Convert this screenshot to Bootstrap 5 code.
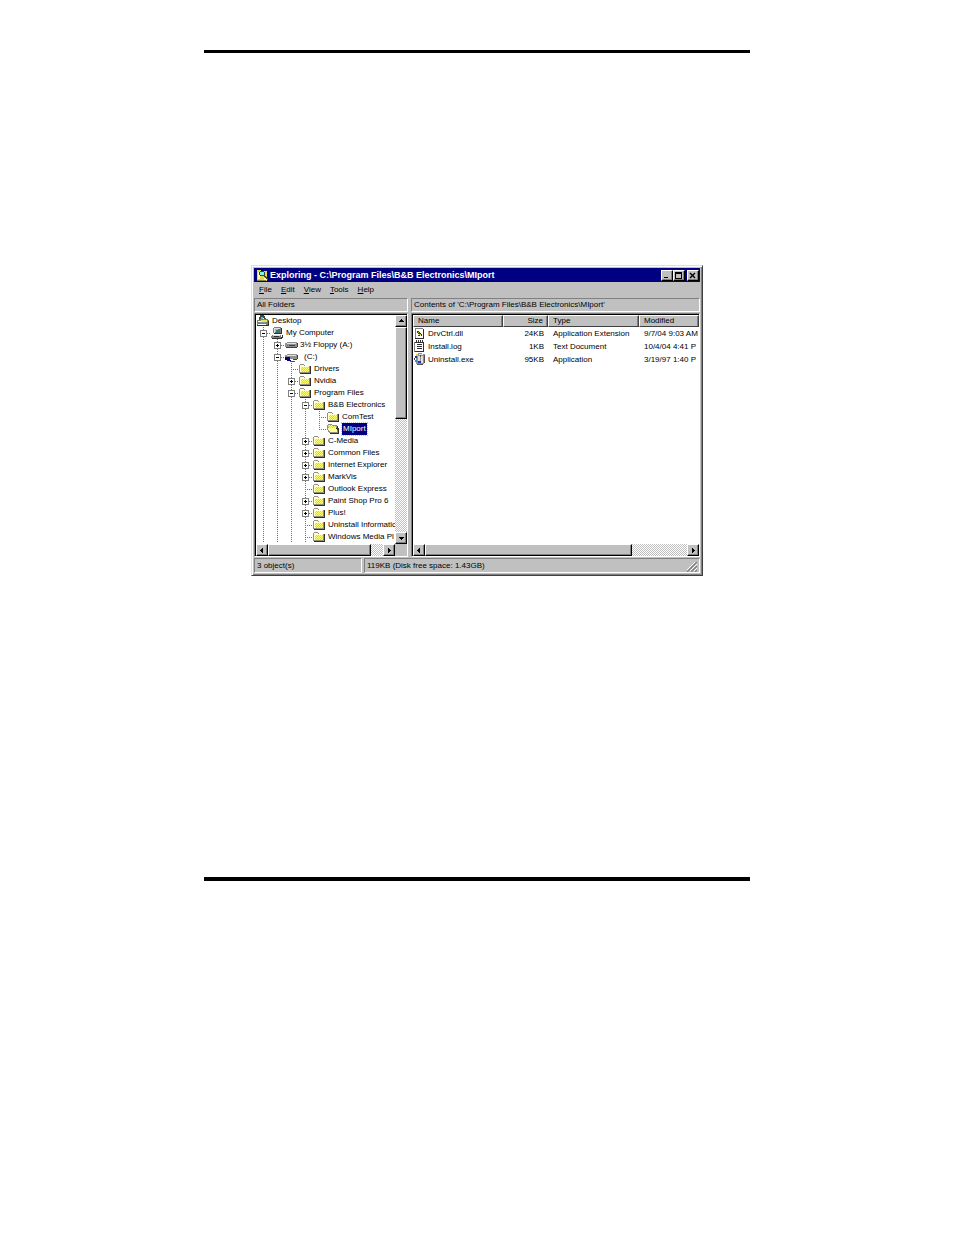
<!DOCTYPE html>
<html lang="en">
<head>
<meta charset="utf-8">
<meta name="viewport" content="width=device-width, initial-scale=1">
<title>Exploring - MIport</title>
<link href="https://cdn.jsdelivr.net/npm/bootstrap@5.3.0/dist/css/bootstrap.min.css" rel="stylesheet">
<style>
  body { font-family: "Liberation Sans", Arial, sans-serif; font-size: 8px; line-height: 12px; color: #000; background: #fff; }
  button { font: inherit; color: inherit; border: 0; padding: 0; background: none; }
  .sheet { max-width: 546px; padding-top: 50px; }
  .rule { height: 3px; background: #000; }
  .rule-end { height: 4px; margin-top: 301px; }
  .explorer { max-width: 452px; margin-top: 212px; background: #c0c0c0; border: 1px solid; border-color: #dfdfdf #404040 #404040 #dfdfdf; box-shadow: inset 1px 1px #fff, inset -1px -1px #808080; padding: 2px; }
  .title-strip { height: 14px; background: #000080; color: #fff; font: bold 9px/14px "Liberation Sans", Arial, sans-serif; padding: 0 1px 0 2px; }
  .raised { background: #c0c0c0; border: 1px solid; border-color: #fff #000 #000 #fff; box-shadow: inset -1px -1px #808080; display: flex; align-items: center; justify-content: center; flex: none; }
  .sunken { border: 1px solid; border-color: #808080 #fff #fff #808080; }
  .win-btn { width: 12px; height: 11px; }
  .win-close { margin-left: 2px; }
  .menu-strip { height: 16px; padding: 0 5px; gap: 9px; }
  .caption { height: 14px; padding: 0 2px; line-height: 12px; white-space: nowrap; overflow: hidden; }
  .panes { display: grid; grid-template-columns: 154px minmax(0, 1fr); column-gap: 3px; }
  .well { background: #fff; border: 1px solid; border-color: #808080 #fff #fff #808080; box-shadow: inset 1px 1px #000; padding: 1px 0 0 1px; margin-top: 1px; }
  .tree { padding: 0 0 1px; margin: 0; list-style: none; overflow: hidden; }
  .tree li { display: flex; height: 12px; white-space: nowrap; }
  .tree svg { width: 14px; height: 12px; flex: none; margin-right: 2px; }
  .guide { width: 14px; height: 12px; flex: none; display: flex; justify-content: center; align-items: center;
    background: repeating-linear-gradient(#707070 0 1px, transparent 1px 2px) 7px 0 / 1px 12px no-repeat; }
  .guide.arm { background: repeating-linear-gradient(#707070 0 1px, transparent 1px 2px) 7px 0 / 1px 12px no-repeat,
    repeating-linear-gradient(90deg, #707070 0 1px, transparent 1px 2px) 7px 6px / 7px 1px no-repeat; }
  .guide.end { background-size: 1px 7px, 7px 1px; }
  .toggle { width: 7px; height: 7px; border: 1px solid #808080; margin: 1px 0 0 1px; flex: none;
    background: linear-gradient(#000, #000) center / 3px 1px no-repeat, #fff; }
  .toggle.plus { background: linear-gradient(#000, #000) center / 3px 1px no-repeat, linear-gradient(#000, #000) center / 1px 3px no-repeat, #fff; }
  .picked { background: #000080; color: #fff; outline: 1px dotted #d0d060; padding: 0 1px; }
  .track { background: repeating-conic-gradient(#c0c0c0 0 25%, #fff 0 50%) 0 0 / 2px 2px; }
  .knob { width: 12px; height: 12px; }
  .knob svg, .win-btn svg { display: block; }
  .files { table-layout: fixed; width: 100%; border-collapse: separate; border-spacing: 0; }
  .files th { font-weight: normal; height: 12px; line-height: 10px; padding: 0 4px; background: #c0c0c0; border: 1px solid; border-color: #fff #404040 #404040 #fff; box-shadow: inset -1px 0 #808080; }
  .files td { height: 13px; line-height: 13px; padding: 0 4px 0 5px; }
  .files th, .files td { white-space: nowrap; overflow: hidden; }
  .files td:first-child { padding-left: 1px; }
  .files td svg { width: 12px; height: 13px; flex: none; margin-right: 2px; }
  .num { text-align: right; }
  .status { height: 15px; margin-top: 1px; gap: 2px; }
  .status .sunken { line-height: 13px; padding: 0 2px; }
</style>
</head>
<body>
<svg width="0" height="0" class="position-absolute" aria-hidden="true" shape-rendering="crispEdges">
  <pattern id="dither" width="2" height="2" patternUnits="userSpaceOnUse"><path fill="#ffff70" d="M0 0h2v2H0z"/><path fill="#e0d838" d="M0 0h1v1H0zM1 1h1v1H1z"/></pattern>
  <symbol id="folder" viewBox="0 0 14 12">
    <path fill="#909080" d="M2 1h4v1h1v1h5v7H1V2h1z"/><path fill="#ffffd0" d="M2 2h4v1h5v1H3v5H2z"/><path fill="url(#dither)" d="M3 4h8v5H3z"/><path fill="#303030" d="M12 3h1v8H2v-1h10z"/>
  </symbol>
  <symbol id="folder-open" viewBox="0 0 14 12">
    <path fill="#909080" d="M2 1h4v1h5v3h1v5H3V9H2V7H1V2h1z"/><path fill="url(#dither)" d="M2 2h4v1h4v2H5v1H3z"/><path fill="#ffff90" d="M2 5h8v1h1v3H4V8H3V7H2z"/><path fill="#303030" d="M11 3h1v2h1v6H4v-1h8V7h-1V6h-1V5h1z"/>
  </symbol>
  <symbol id="desktop" viewBox="0 0 14 12">
    <path fill="#404840" d="M4 0h4v1h1v2h1v2H8V3H7V2H5v2H4v1H3V2h1z"/><path fill="#50c0c0" d="M5 2h2v3H4V4h1z"/><path fill="#808060" d="M1 5h3V4h8v1h1v6H1z"/><path fill="#f0e060" d="M5 5h6v2H5z"/><path fill="#fff" d="M2 6h3v1H2zM2 9h8v1H2z"/><path fill="#70a8a8" d="M4 7h6v1H4z"/><path fill="#303030" d="M1 11h12V6h-1v4H1z"/>
  </symbol>
  <symbol id="computer" viewBox="0 0 14 12">
    <path fill="#808080" d="M4 0h7v6H3V1h1zM2 8h9v3H1V9h1z"/><path fill="#e0e0e0" d="M4 1h6v1H5v4H4zM3 8h7v1H3z"/><path fill="#387878" d="M5 2h5v4H5z"/><path fill="#90c0c0" d="M5 2h3v1H6v2H5z"/><path fill="#303030" d="M11 1h1v6H4V6h7zM12 8h1v3h-1v1H2v-1h9v-1h1zM4 9h5v1H4z"/>
  </symbol>
  <symbol id="floppy" viewBox="0 0 14 12">
    <path fill="#909090" d="M3 3h10v1h1v4h-1v1H2V8H1V4h2z"/><path fill="#e0e0e0" d="M3 4h9v1H3z"/><path fill="#404040" d="M2 9h11V8h1V4h-1v4H2zM5 6h6v1H5z"/><path fill="#a06060" d="M3 6h1v1H3z"/>
  </symbol>
  <symbol id="drive" viewBox="0 0 14 12">
    <path fill="#909090" d="M3 3h10v1h1v3h-1v1H2V7H1V4h2z"/><path fill="#e0e0e0" d="M3 4h9v1H3z"/><path fill="#404040" d="M13 4h1v4h-1v1H8V8h5z"/><path fill="#000080" d="M1 6h5v2h1v2H3V9H1z"/><path fill="#fff" d="M6 8h3v1h2v1H7V9H6z"/><path fill="#505050" d="M6 10h5v1H6z"/>
  </symbol>
  <symbol id="dll" viewBox="0 0 12 13">
    <path fill="#fff" d="M1 1h8v11H1z"/><path fill="#808080" d="M1 1h8v1H2v10H1z"/><path fill="#303030" d="M9 2h1v10H1v-1h8zM3 4h2v1h1v1h1v1h1v2H7V8H6V7H4V6H3zM4 8h2v1H4z"/><path fill="#d0c020" d="M4 5h1v1H4zM5 7h2v1H5z"/>
  </symbol>
  <symbol id="log" viewBox="0 0 12 13">
    <path fill="#fff" d="M1 2h8v10H1z"/><path fill="#303030" d="M2 0h1v2h1V0h1v2h1V0h1v2h1V0h1v2h1v10H1v-1h8V3H1V2h1zM3 4h5v1H3zM3 6h5v1H3zM3 8h5v1H3z"/><path fill="#808080" d="M0 2h1v10H0z"/>
  </symbol>
  <symbol id="setup" viewBox="0 0 12 13">
    <path fill="#909090" d="M4 0h4v1h3v8h-1v2H9v1H3v-1H2V3h2z"/><path fill="#e0e0e0" d="M5 1h4v1H5zM4 3h2v5H4zM7 3h2v7H7z"/><path fill="#505050" d="M10 2h1v8h-1zM3 11h6v1H3zM6 2h1v2H6z"/><path fill="#3030b0" d="M1 3h2v2H1zM0 5h1v2H0zM4 8h3v2H4z"/><path fill="#e0d020" d="M2 1h2v2H2z"/><path fill="#20a0a0" d="M1 7h2v2H1z"/>
  </symbol>
  <symbol id="up" viewBox="0 0 7 4"><path d="M3 0h1v1h1v1h1v1H1V2h1V1h1z"/></symbol>
  <symbol id="down" viewBox="0 0 7 4"><path d="M1 1h5v1H5v1H4v1H3V3H2V2H1z"/></symbol>
  <symbol id="left" viewBox="0 0 4 7"><path d="M3 1v5H2V5H1V4H0V3h1V2h1V1z"/></symbol>
  <symbol id="right" viewBox="0 0 4 7"><path d="M1 1v5h1V5h1V4h1V3H3V2H2V1z"/></symbol>
</svg>

<main class="sheet mx-auto">
  <div class="rule"></div>

  <section class="explorer mx-auto">
    <header class="title-strip d-flex align-items-center">
      <svg width="14" height="13" viewBox="0 0 14 13" class="flex-shrink-0" shape-rendering="crispEdges" aria-hidden="true"><path fill="#e8d840" d="M1 1h4v1h6v10H1z"/><path fill="#ffffb0" d="M2 3h2v7H2zM8 9h3v2H8z"/><path fill="#404040" d="M4 2h4v1h1v4h1v1h1v1h1v2h-1v-1h-1V9H9V8H8V7H4V6H3V3h1z"/><path fill="#80f0f0" d="M4 3h4v3H4z"/><path fill="#808040" d="M1 11h9v1H1z"/></svg>
      <span class="flex-grow-1 text-truncate">Exploring - C:\Program Files\B&amp;B Electronics\MIport</span>
      <button class="raised win-btn" aria-label="Minimize"><svg width="8" height="7" shape-rendering="crispEdges"><path d="M1 5h4v1H1z"/></svg></button>
      <button class="raised win-btn" aria-label="Maximize"><svg width="8" height="7" shape-rendering="crispEdges"><path fill-rule="evenodd" d="M0 0h7v7H0zM1 2h5v4H1z"/></svg></button>
      <button class="raised win-btn win-close" aria-label="Close"><svg width="8" height="7"><path d="M1 1l5 5M6 1L1 6" stroke="#000" stroke-width="1.4"/></svg></button>
    </header>

    <nav class="menu-strip d-flex align-items-center" aria-label="Menu">
      <button><u>F</u>ile</button><button><u>E</u>dit</button><button><u>V</u>iew</button><button><u>T</u>ools</button><button><u>H</u>elp</button>
    </nav>

    <div class="panes">
      <div class="sunken caption">All Folders</div>
      <div class="sunken caption">Contents of 'C:\Program Files\B&amp;B Electronics\MIport'</div>

      <div class="well d-flex flex-column">
        <div class="d-flex flex-grow-1">
          <ul class="tree flex-grow-1">
            <li><svg><use href="#desktop"/></svg>Desktop</li>
            <li><span class="guide arm"><button class="toggle" aria-label="Collapse"></button></span><svg><use href="#computer"/></svg>My Computer</li>
            <li><span class="guide"></span><span class="guide arm"><button class="toggle plus" aria-label="Expand"></button></span><svg><use href="#floppy"/></svg>3½ Floppy (A:)</li>
            <li><span class="guide"></span><span class="guide arm"><button class="toggle" aria-label="Collapse"></button></span><svg><use href="#drive"/></svg><span class="ps-1">(C:)</span></li>
            <li><span class="guide"></span><span class="guide"></span><span class="guide arm"></span><svg><use href="#folder"/></svg>Drivers</li>
            <li><span class="guide"></span><span class="guide"></span><span class="guide arm"><button class="toggle plus" aria-label="Expand"></button></span><svg><use href="#folder"/></svg>Nvidia</li>
            <li><span class="guide"></span><span class="guide"></span><span class="guide arm"><button class="toggle" aria-label="Collapse"></button></span><svg><use href="#folder"/></svg>Program Files</li>
            <li><span class="guide"></span><span class="guide"></span><span class="guide"></span><span class="guide arm"><button class="toggle" aria-label="Collapse"></button></span><svg><use href="#folder"/></svg>B&amp;B Electronics</li>
            <li><span class="guide"></span><span class="guide"></span><span class="guide"></span><span class="guide"></span><span class="guide arm"></span><svg><use href="#folder"/></svg>ComTest</li>
            <li><span class="guide"></span><span class="guide"></span><span class="guide"></span><span class="guide"></span><span class="guide arm end"></span><svg><use href="#folder-open"/></svg><span class="picked">MIport</span></li>
            <li><span class="guide"></span><span class="guide"></span><span class="guide"></span><span class="guide arm"><button class="toggle plus" aria-label="Expand"></button></span><svg><use href="#folder"/></svg>C-Media</li>
            <li><span class="guide"></span><span class="guide"></span><span class="guide"></span><span class="guide arm"><button class="toggle plus" aria-label="Expand"></button></span><svg><use href="#folder"/></svg>Common Files</li>
            <li><span class="guide"></span><span class="guide"></span><span class="guide"></span><span class="guide arm"><button class="toggle plus" aria-label="Expand"></button></span><svg><use href="#folder"/></svg>Internet Explorer</li>
            <li><span class="guide"></span><span class="guide"></span><span class="guide"></span><span class="guide arm"><button class="toggle plus" aria-label="Expand"></button></span><svg><use href="#folder"/></svg>MarkVis</li>
            <li><span class="guide"></span><span class="guide"></span><span class="guide"></span><span class="guide arm"></span><svg><use href="#folder"/></svg>Outlook Express</li>
            <li><span class="guide"></span><span class="guide"></span><span class="guide"></span><span class="guide arm"><button class="toggle plus" aria-label="Expand"></button></span><svg><use href="#folder"/></svg>Paint Shop Pro 6</li>
            <li><span class="guide"></span><span class="guide"></span><span class="guide"></span><span class="guide arm"><button class="toggle plus" aria-label="Expand"></button></span><svg><use href="#folder"/></svg>Plus!</li>
            <li><span class="guide"></span><span class="guide"></span><span class="guide"></span><span class="guide arm"></span><svg><use href="#folder"/></svg>Uninstall Informatic</li>
            <li><span class="guide"></span><span class="guide"></span><span class="guide"></span><span class="guide arm"></span><svg><use href="#folder"/></svg>Windows Media Pl</li>
          </ul>
          <div class="track d-flex flex-column flex-shrink-0">
            <button class="raised knob" aria-label="Scroll up"><svg width="7" height="4"><use href="#up"/></svg></button>
            <div class="raised" style="height:40%"></div>
            <button class="raised knob mt-auto" aria-label="Scroll down"><svg width="7" height="4"><use href="#down"/></svg></button>
          </div>
        </div>
        <div class="d-flex">
          <div class="track d-flex flex-grow-1">
            <button class="raised knob" aria-label="Scroll left"><svg width="4" height="7"><use href="#left"/></svg></button>
            <div class="raised" style="width:74%"></div>
            <button class="raised knob ms-auto" aria-label="Scroll right"><svg width="4" height="7"><use href="#right"/></svg></button>
          </div>
          <div class="knob" style="background:#c0c0c0"></div>
        </div>
      </div>

      <div class="well d-flex flex-column">
        <table class="files">
          <colgroup><col style="width:90px"><col style="width:45px"><col style="width:91px"><col></colgroup>
          <thead><tr><th>Name</th><th class="num">Size</th><th>Type</th><th>Modified</th></tr></thead>
          <tbody>
            <tr><td><div class="d-flex"><svg><use href="#dll"/></svg>DrvCtrl.dll</div></td><td class="num">24KB</td><td>Application Extension</td><td>9/7/04 9:03 AM</td></tr>
            <tr><td><div class="d-flex"><svg><use href="#log"/></svg>Install.log</div></td><td class="num">1KB</td><td>Text Document</td><td>10/4/04 4:41 P</td></tr>
            <tr><td><div class="d-flex"><svg><use href="#setup"/></svg>Uninstall.exe</div></td><td class="num">95KB</td><td>Application</td><td>3/19/97 1:40 P</td></tr>
          </tbody>
        </table>
        <div class="track d-flex mt-auto">
          <button class="raised knob" aria-label="Scroll left"><svg width="4" height="7"><use href="#left"/></svg></button>
          <div class="raised" style="width:72.5%"></div>
          <button class="raised knob ms-auto" aria-label="Scroll right"><svg width="4" height="7"><use href="#right"/></svg></button>
        </div>
      </div>
    </div>

    <footer class="status d-flex">
      <div class="sunken" style="width:108px">3 object(s)</div>
      <div class="sunken flex-grow-1 d-flex justify-content-between align-items-end">119KB (Disk free space: 1.43GB)
        <svg width="10" height="10" aria-hidden="true"><path d="M0 10L10 0M4 10L10 4M8 10L10 8" stroke="#808080" stroke-width="1.4"/><path d="M-1 9L9 -1M3 9L10 2M7 9L10 6" stroke="#fff"/></svg>
      </div>
    </footer>
  </section>

  <div class="rule rule-end"></div>
</main>
<script src="https://cdn.jsdelivr.net/npm/bootstrap@5.3.0/dist/js/bootstrap.bundle.min.js"></script>
</body>
</html>
